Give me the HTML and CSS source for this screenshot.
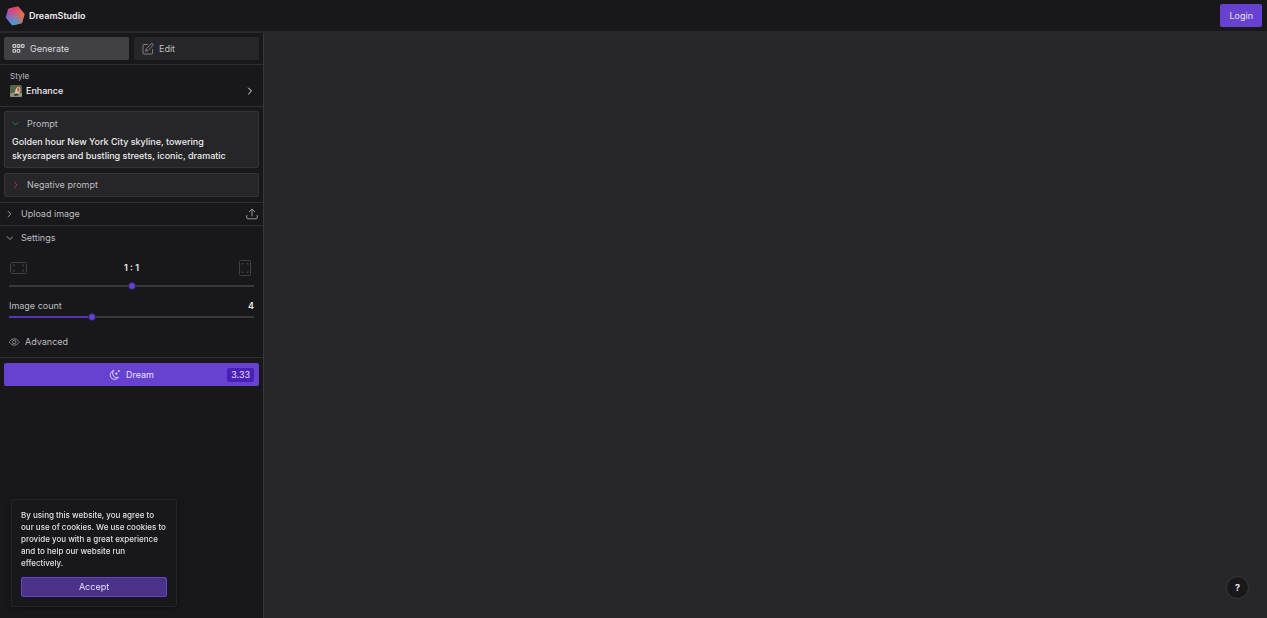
FILE: index.html
```
<!DOCTYPE html>
<html lang="en">
<head>
<meta charset="UTF-8">
<meta name="viewport" content="width=device-width, initial-scale=1.0">
<title>DreamStudio</title>
<link rel="stylesheet" href="styles.css">
</head>
<body>

<header class="topbar">
    <a class="brand" href="#">
        <svg class="logo" width="20" height="20" viewBox="0 0 20 20">
            <defs>
                <linearGradient id="logoBase" x1="0" y1="0.6" x2="1" y2="0.4">
                    <stop offset="0" stop-color="#9a45d8"/>
                    <stop offset="0.5" stop-color="#c8607f"/>
                    <stop offset="1" stop-color="#e8743f"/>
                </linearGradient>
                <radialGradient id="logoTop" cx="0.45" cy="0" r="0.5">
                    <stop offset="0" stop-color="#e83a6c"/>
                    <stop offset="1" stop-color="#e83a6c" stop-opacity="0"/>
                </radialGradient>
                <radialGradient id="logoBottom" cx="0.4" cy="1" r="0.7">
                    <stop offset="0" stop-color="#35a5d8"/>
                    <stop offset="1" stop-color="#35a5d8" stop-opacity="0"/>
                </radialGradient>
            </defs>
            <path d="M4 2.500 12.500.5l1.200.4 5.600 6.600.2 1.200-2.300 8-.9.800-8.500 1.700-1.100-.4L1 11.700l-.2-1.200L3.200 3.200z" fill="url(#logoBase)"/>
            <path d="M4 2.500 12.500.5l1.200.4 5.600 6.600.2 1.200-2.300 8-.9.800-8.500 1.700-1.100-.4L1 11.700l-.2-1.200L3.200 3.200z" fill="url(#logoTop)"/>
            <path d="M4 2.500 12.500.5l1.200.4 5.600 6.600.2 1.200-2.300 8-.9.800-8.500 1.700-1.100-.4L1 11.700l-.2-1.200L3.200 3.200z" fill="url(#logoBottom)"/>
        </svg>
        <span>DreamStudio</span>
    </a>
    <button type="button" class="login-btn">Login</button>
</header>

<div class="layout">
    <aside class="sidebar">
        <nav class="tabs">
            <button type="button" class="tab active">
                <svg width="13" height="12" viewBox="0 0 13 12" fill="none" stroke="currentColor" stroke-width="1.200">
                    <rect x="1" y="1.700" width="2.600" height="2.600" rx=".6"/>
                    <rect x="5.200" y="1.700" width="2.600" height="2.600" rx=".6"/>
                    <rect x="9.400" y="1.700" width="2.600" height="2.600" rx=".6"/>
                    <rect x="1" y="6.500" width="2.600" height="2.600" rx=".6"/>
                    <rect x="5.200" y="6.500" width="2.600" height="2.600" rx=".6"/>
                </svg>
                Generate
            </button>
            <button type="button" class="tab">
                <svg width="12" height="12" viewBox="0 0 24 24" fill="none" stroke="currentColor" stroke-width="1.8" stroke-linecap="round" stroke-linejoin="round">
                    <path d="M11 3H4a2 2 0 0 0-2 2v15a2 2 0 0 0 2 2h15a2 2 0 0 0 2-2v-7"/>
                    <path d="M18.5 1.8a2.3 2.3 0 0 1 3.3 3.3L12 15l-5 1.5L8.5 12z"/>
                </svg>
                Edit
            </button>
        </nav>

        <section class="style-section">
            <span class="style-label" id="styleLabel">Style</span>
            <button type="button" class="style-picker" aria-describedby="styleLabel">
                <svg class="thumb" width="12" height="12" viewBox="0 0 12 12">
                    <rect width="12" height="12" rx="1.5" fill="#536547"/>
                    <path d="M0 8.500 5 7l7 1v2.500a1.500 1.500 0 0 1-1.500 1.500h-9A1.500 1.500 0 0 1 0 10.500z" fill="#8b9878"/>
                    <path d="M5 8.500C5 5 6 2.500 8.500 1.500c2 .5 2.300 3 1.500 5.500L7.500 9.500z" fill="#d0ccc0"/>
                    <path d="M7.300 3 9 2.300l.7 3-1.500 2-1-1z" fill="#d9532c"/>
                    <path d="m4 9.500 3-1.200 2 2-4.500.7z" fill="#3b3431"/>
                </svg>
                <span>Enhance</span>
                <svg class="push-right" width="8" height="10" viewBox="0 0 8 10" fill="none" stroke="currentColor" stroke-linecap="round" stroke-linejoin="round"><path d="m2.500 2 3 3-3 3"/></svg>
            </button>
        </section>

        <section class="prompts">
            <div class="prompt-box">
                <label class="prompt-head" for="prompt">
                    <svg class="green" width="8" height="8" viewBox="0 0 8 8" fill="none" stroke="currentColor" stroke-linecap="round" stroke-linejoin="round"><path d="m1 2.500 2.500 2.500L6 2.500"/></svg>
                    Prompt
                </label>
                <textarea id="prompt" rows="2" spellcheck="false">Golden hour New York City skyline, towering skyscrapers and bustling streets, iconic, dramatic</textarea>
            </div>
            <button type="button" class="prompt-box negative">
                <svg class="red" width="8" height="8" viewBox="0 0 8 8" fill="none" stroke="currentColor" stroke-linecap="round" stroke-linejoin="round"><path d="M2.500 1.200 5.300 4 2.500 6.800"/></svg>
                Negative prompt
            </button>
        </section>

        <section class="upload">
            <button type="button" class="row-toggle">
                <svg width="8" height="8" viewBox="0 0 8 8" fill="none" stroke="currentColor" stroke-linecap="round" stroke-linejoin="round"><path d="M3 1.200 5.800 4 3 6.800"/></svg>
                Upload image
            </button>
            <button type="button" class="icon-btn" aria-label="Upload">
                <svg width="12" height="12" viewBox="0 0 12 12" fill="none" stroke="currentColor" stroke-linecap="round" stroke-linejoin="round"><path d="M6 8V1.200M3.300 3.700 6 1.100l2.700 2.600M.8 7.500V10a.8.8 0 0 0 .8.8h8.800a.8.8 0 0 0 .8-.8V7.500"/></svg>
            </button>
        </section>

        <section class="settings">
            <button type="button" class="row-toggle">
                <svg width="8" height="8" viewBox="0 0 8 8" fill="none" stroke="currentColor" stroke-linecap="round" stroke-linejoin="round"><path d="m2 2.500 3 3 3-3"/></svg>
                Settings
            </button>

            <div class="field ratio">
                <label class="ratio-row" for="ratio">
                    <svg width="18" height="18" viewBox="0 0 18 18" fill="none" stroke="currentColor">
                        <rect x="1.500" y="3.500" width="16" height="11" rx="1"/>
                        <path d="M4.500 7.500V6H6M13 6h1.500v1.500M14.500 10.500V12H13M6 12H4.500v-1.500"/>
                    </svg>
                    <strong>1 : 1</strong>
                    <svg width="18" height="18" viewBox="0 0 18 18" fill="none" stroke="currentColor">
                        <rect x="3.500" y="1.500" width="11" height="15" rx="1"/>
                        <path d="M6 6V4.500h1.500M10.500 4.500H12V6M12 12v1.500h-1.500M7.500 13.500H6V12"/>
                    </svg>
                </label>
                <input type="range" id="ratio" min="0" max="10" value="5">
            </div>

            <div class="field count">
                <div class="count-row">
                    <label for="count">Image count</label>
                    <strong>4</strong>
                </div>
                <input type="range" class="filled" id="count" min="1" max="10" value="4">
            </div>

            <button type="button" class="advanced">
                <svg width="12" height="12" viewBox="0 0 24 24" fill="none" stroke="currentColor" stroke-width="1.700" stroke-linejoin="round"><path d="M2.500 12S6 5.500 12.500 5.500 22.500 12 22.500 12 19 18.500 12.500 18.500 2.500 12 2.500 12z"/><circle cx="12.500" cy="12" r="3.500"/></svg>
                Advanced
            </button>
        </section>

        <div class="dream">
            <button type="button" class="dream-btn">
                <span class="dream-text">
                    <svg width="12" height="12" viewBox="0 0 12 12" fill="none" stroke="currentColor" stroke-width=".9" stroke-linecap="round" stroke-linejoin="round">
                        <path d="M4.500 1.500a4.500 4.500 0 1 0 5 6.700A4.300 4.300 0 0 1 4.500 1.500z"/>
                        <path d="M7.300 3.700v1.800M6.400 4.600h1.800M9.800 1.400v1.200M9.200 2h1.200" stroke-width=".8"/>
                    </svg>
                    Dream
                </span>
                <span class="cost">3.33</span>
            </button>
        </div>
    </aside>

    <main class="canvas"></main>
</div>

<div class="cookie-banner">
    <p>By using this website, you agree to our use of cookies. We use cookies to provide you with a great experience and to help our website run effectively.</p>
    <button type="button">Accept</button>
</div>

<button type="button" class="help-btn" aria-label="Help">?</button>

</body>
</html>
```
FILE: styles.css
```
* {
    box-sizing: border-box;
}

body {
    margin: 0;
    height: 100vh;
    display: flex;
    flex-direction: column;
    overflow: hidden;
    background-color: #18181a;
    color: #bebec1;
    font-family: Inter, sans-serif;
    font-size: 9px;
    line-height: 14px;
}

button,
textarea {
    font: inherit;
    color: inherit;
    background: none;
    border: none;
    padding: 0;
    margin: 0;
}

button {
    cursor: pointer;
}

svg {
    flex: none;
    display: block;
}

.topbar {
    display: flex;
    align-items: center;
    justify-content: space-between;
    height: 33px;
    padding: 0 5px;
    border-bottom: 2px solid #29292b;
}

.brand {
    display: flex;
    align-items: center;
    gap: 4px;
    color: #ececee;
    font-weight: 600;
    text-decoration: none;
}

.login-btn {
    height: 23px;
    padding: 0 9px;
    background-color: #6742d1;
    color: #e8e2fa;
    border-radius: 2px;
}

.layout {
    flex: 1;
    display: flex;
    min-height: 0;
}

.sidebar {
    width: 264px;
    flex: none;
    border-right: 1px solid #38383b;
}

.canvas {
    flex: 1;
    background-color: #27272a;
}

.tabs {
    display: flex;
    gap: 5px;
    padding: 4px;
    border-bottom: 1px solid #303033;
}

.tab {
    flex: 1;
    display: flex;
    align-items: center;
    gap: 5px;
    height: 23px;
    padding: 0 8px;
    background-color: #262628;
    border-radius: 2px;
}

.tab svg {
    color: #88888c;
}

.tab.active {
    background-color: #404045;
    color: #dcdcdf;
}

.tab.active svg {
    color: #c4c4c8;
}

.style-section {
    padding: 4px 9px 7px 10px;
    border-bottom: 1px solid #303033;
}

.style-label {
    display: block;
    font-size: 8px;
}

.style-picker {
    display: flex;
    align-items: center;
    gap: 4px;
    width: 100%;
    height: 16px;
    color: #f0f0f2;
    font-weight: 500;
}

.push-right {
    margin-left: auto;
}

.prompts {
    display: flex;
    flex-direction: column;
    gap: 5px;
    padding: 4px 4px 5px;
    border-bottom: 1px solid #303033;
}

.prompt-box {
    padding: 4px 7px;
    background-color: #262628;
    border: 1px solid #343437;
    border-radius: 2px;
}

.prompt-head {
    display: flex;
    align-items: center;
    gap: 7px;
    height: 16px;
}

.prompt-box textarea {
    display: block;
    width: 100%;
    margin-top: 3px;
    color: #ececee;
    font-weight: 500;
    resize: none;
    outline: none;
    overflow: hidden;
}

.negative {
    display: flex;
    align-items: center;
    gap: 7px;
    height: 24px;
    padding: 0 7px;
}

.green {
    color: #1f8a56;
}

.red {
    color: #b93348;
}

.upload {
    display: flex;
    align-items: center;
    justify-content: space-between;
    height: 23px;
    padding: 0 5px;
    border-bottom: 1px solid #303033;
}

.row-toggle {
    display: flex;
    align-items: center;
    gap: 8px;
}

.row-toggle svg,
.icon-btn,
.advanced svg {
    color: #98989c;
}

.settings {
    padding: 5px 5px 8px;
    border-bottom: 1px solid #303033;
}

.field {
    padding: 0 4px;
}

.field strong {
    color: #ececee;
    font-weight: 600;
}

.ratio {
    margin-top: 14px;
}

.ratio-row,
.count-row {
    display: flex;
    align-items: center;
    justify-content: space-between;
}

.ratio-row svg {
    color: #404043;
}

.count {
    margin-top: 9px;
}

input[type="range"] {
    -webkit-appearance: none;
    appearance: none;
    display: block;
    width: 100%;
    height: 8px;
    margin: 0;
    background: linear-gradient(#39393c, #39393c) center / 100% 2px no-repeat;
}

.ratio input {
    margin-top: 5px;
}

input[type="range"].filled {
    background: linear-gradient(to right, #5535b0 34%, #39393c 34%) center / 100% 2px no-repeat;
}

input[type="range"]::-webkit-slider-thumb {
    -webkit-appearance: none;
    appearance: none;
    width: 8px;
    height: 8px;
    background-color: #6742d1;
    border: 1px solid #2c2353;
    border-radius: 50%;
}

.advanced {
    display: flex;
    align-items: center;
    gap: 5px;
    margin-top: 14px;
    padding: 0 3px;
}

.dream {
    padding: 5px 4px;
}

.dream-btn {
    display: grid;
    grid-template-columns: 1fr auto 1fr;
    align-items: center;
    width: 100%;
    height: 23px;
    padding: 0 5px;
    background-color: #6742d1;
    color: #e8e2fa;
    border-radius: 2px;
}

.dream-text {
    grid-column: 2;
    display: flex;
    align-items: center;
    gap: 5px;
}

.cost {
    justify-self: end;
    padding: 0 4px;
    background-color: #4a1fb5;
    border-radius: 2px;
}

.cookie-banner {
    position: fixed;
    left: 11px;
    bottom: 11px;
    width: 166px;
    padding: 9px;
    background-color: #18181a;
    border: 1px solid #252528;
    border-radius: 2px;
    box-shadow: 0 2px 6px rgba(0, 0, 0, 0.3);
}

.cookie-banner p {
    margin: 0 0 8px;
    color: #e0e0e3;
    font-size: 8px;
    font-weight: 500;
    line-height: 12px;
}

.cookie-banner button {
    width: 100%;
    height: 20px;
    background-color: #4b3289;
    color: #e8e2fa;
    border: 1px solid #6742d1;
    border-radius: 2px;
}

.help-btn {
    position: fixed;
    right: 18px;
    bottom: 19px;
    width: 23px;
    height: 23px;
    background-color: #18181a;
    color: #f0f0f2;
    border: 1px solid #38383b;
    border-radius: 50%;
    font-weight: 700;
}
```
